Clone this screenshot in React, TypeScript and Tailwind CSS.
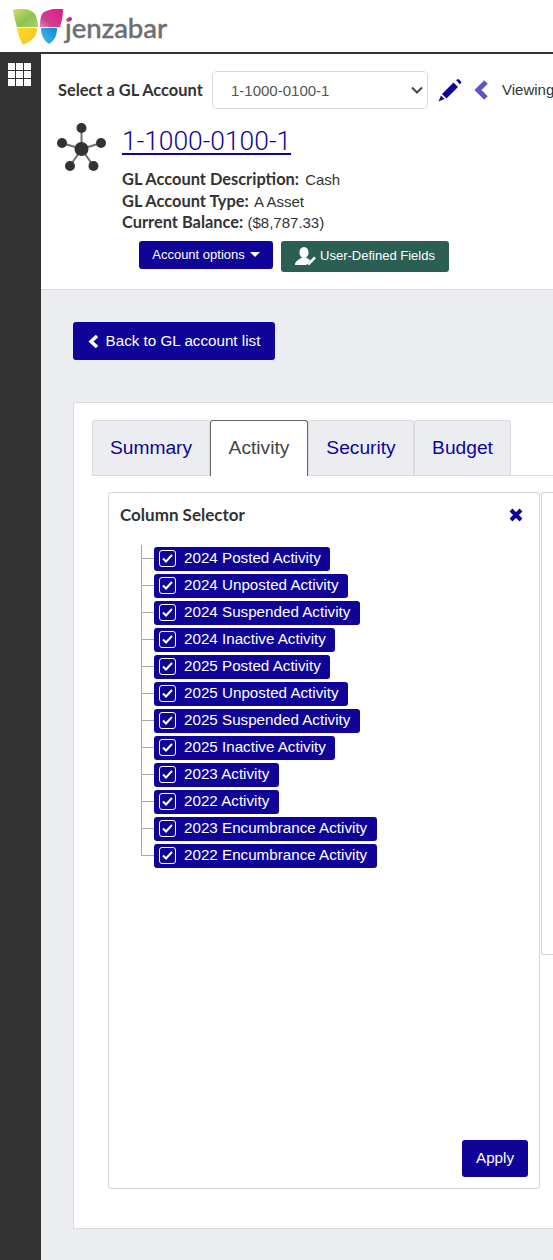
const columns = [
  '2024 Posted Activity',
  '2024 Unposted Activity',
  '2024 Suspended Activity',
  '2024 Inactive Activity',
  '2025 Posted Activity',
  '2025 Unposted Activity',
  '2025 Suspended Activity',
  '2025 Inactive Activity',
  '2023 Activity',
  '2022 Activity',
  '2023 Encumbrance Activity',
  '2022 Encumbrance Activity',
];

function Butterfly() {
  return (
    <svg width="51" height="37" viewBox="0 0 51 37" className="shrink-0">
      <defs>
        <linearGradient id="wingGreen" x1="0" y1="0" x2="1" y2="1">
          <stop offset="0" stopColor="#cfdc6a" />
          <stop offset="0.55" stopColor="#8fc24e" />
          <stop offset="1" stopColor="#a9cf7a" />
        </linearGradient>
        <linearGradient id="wingPink" x1="1" y1="0" x2="0" y2="1">
          <stop offset="0" stopColor="#e2168c" />
          <stop offset="0.7" stopColor="#d0408f" />
          <stop offset="1" stopColor="#d98ab0" />
        </linearGradient>
        <linearGradient id="wingYellow" x1="0" y1="0" x2="1" y2="1">
          <stop offset="0" stopColor="#fbdc1e" />
          <stop offset="0.7" stopColor="#f8c82a" />
          <stop offset="1" stopColor="#f29a3a" />
        </linearGradient>
        <linearGradient id="wingBlue" x1="1" y1="0" x2="0" y2="1">
          <stop offset="0" stopColor="#0f86cf" />
          <stop offset="1" stopColor="#49c0e6" />
        </linearGradient>
      </defs>
      <path d="M0 1 C6 -1 17 -1 22 5 C24 9 25 14 25 18 L4 18 C2 12 1 6 0 1 Z" fill="url(#wingGreen)" />
      <path d="M50 0 C44 -1 33 0 29 5 C27 9 27 14 27 18 L47 18 C49 12 50 6 50 0 Z" fill="url(#wingPink)" />
      <path d="M4 19 L24 19 C24 26 21 31 10 36 C7 31 5 25 4 19 Z" fill="url(#wingYellow)" />
      <path d="M28 19 L44 19 C44 26 42 31 36 35 C31 32 28 26 28 19 Z" fill="url(#wingBlue)" />
    </svg>
  );
}

function AccountGraphic() {
  return (
    <svg width="50" height="50" viewBox="0 0 50 50" className="shrink-0">
      <g stroke="#6f6f6f" strokeWidth="2">
        <line x1="24.5" y1="26" x2="24.5" y2="5" />
        <line x1="24.5" y1="26" x2="5" y2="20" />
        <line x1="24.5" y1="26" x2="44" y2="20" />
        <line x1="24.5" y1="26" x2="13" y2="43" />
        <line x1="24.5" y1="26" x2="36.5" y2="43" />
      </g>
      <g fill="#333333">
        <circle cx="24.5" cy="26" r="7" />
        <circle cx="24.5" cy="5" r="5" />
        <circle cx="5" cy="20" r="5" />
        <circle cx="44" cy="20" r="5" />
        <circle cx="13" cy="43" r="5" />
        <circle cx="36.5" cy="43" r="5" />
      </g>
    </svg>
  );
}

function GridIcon() {
  return (
    <div className="grid w-[23px] grid-cols-3 gap-px">
      {Array.from({ length: 9 }).map((_, i) => (
        <div key={i} className="h-[7px] w-[7px] bg-white" />
      ))}
    </div>
  );
}

function UserPenIcon() {
  return (
    <svg width="21" height="19" viewBox="0 0 21 19" className="shrink-0">
      <ellipse cx="9" cy="5.5" rx="4.5" ry="5.5" fill="#ffffff" />
      <path d="M0 18 C0 14 4 12.5 7 10.5 L11 10.5 C12.5 11.5 14 12 15 13 L11.5 18 Z" fill="#ffffff" />
      <path d="M13 17.5 L20 10.5" stroke="#ffffff" strokeWidth="2.5" />
    </svg>
  );
}

function ColumnRow({ label, last }: { label: string; last: boolean }) {
  return (
    <div className="relative flex h-[27px] items-center pl-[13px]">
      <div className={`absolute left-0 top-0 w-px bg-[#a8a8a4] ${last ? 'h-[14px]' : 'h-[27px]'}`} />
      <div className="absolute left-0 top-[13px] h-px w-[13px] bg-[#a8a8a4]" />
      <div className="flex h-[24px] items-center gap-[8px] rounded-[3px] bg-[#100498] pl-[5px] pr-[9.5px] text-[15.2px] text-white">
        <span className="flex h-[17px] w-[17px] items-center justify-center rounded-[3px] border border-white">
          <svg width="11" height="9" viewBox="0 0 11 9">
            <path d="M1 4.5 L4 7.5 L10 1" fill="none" stroke="#ffffff" strokeWidth="2" />
          </svg>
        </span>
        {label}
      </div>
    </div>
  );
}

export default function App() {
  return (
    <div className="h-[1260px] w-[553px] overflow-hidden bg-white font-['Liberation_Sans',Arial,sans-serif] text-[#333333]">
      <header className="flex h-[54px] items-start border-b-2 border-[#333333] pl-[13px] pt-[9px]">
        <Butterfly />
        <span className="relative ml-[1px] mt-[4px] font-['Lato',sans-serif] text-[27.5px] font-medium leading-[30px] text-[#6d6e71] [-webkit-text-stroke:0.4px_#6d6e71]">
          jenzabar
          <span className="absolute left-[3px] top-[4px] h-[4px] w-[4px] rounded-full bg-[#e2168c]" />
        </span>
      </header>

      <div className="flex h-[1206px]">
        <aside className="w-[41px] shrink-0 bg-[#333333] pl-[8px] pt-[9px]">
          <GridIcon />
        </aside>

        <main className="min-w-0 flex-1 bg-[#ebedf1]">
          <section className="h-[236px] w-[512px] overflow-hidden border-b border-[#dcdcdc] bg-white pl-[16px] pt-[17px]">
            <div className="flex h-[38px] items-center whitespace-nowrap">
              <label className="ml-[1px] w-[154px] shrink-0 font-['Lato',sans-serif] text-[16.4px] font-bold">Select a GL Account</label>
              <div className="flex h-[38px] w-[216px] shrink-0 items-center justify-between rounded-[5px] border border-[#d8d8d8] pl-[18px] pr-[4px] text-[15px] text-[#555555]">
                <span className="pt-[2px]">1-1000-0100-1</span>
                <svg width="12" height="8" viewBox="0 0 12 8">
                  <path d="M1 1.5 L6 6.5 L11 1.5" fill="none" stroke="#444444" strokeWidth="2" />
                </svg>
              </div>
              <svg width="24" height="23" viewBox="0 0 24 23" className="ml-[10px] shrink-0">
                <g fill="#100498">
                  <path d="M18 1 L20.5 0 L23.5 3 L22 5.5 Z" />
                  <path d="M15.5 3.5 L20 8 L8.5 19.5 L4 15 Z" />
                  <path d="M3 16.5 L6.5 20 L0.5 22.5 Z" />
                </g>
              </svg>
              <svg width="15" height="20" viewBox="0 0 15 20" className="ml-[12px] shrink-0">
                <path d="M12 2 L4 10 L12 18" fill="none" stroke="#5f55c0" strokeWidth="5" />
              </svg>
              <span className="ml-[13px] text-[15px]">Viewing</span>
            </div>

            <div className="mt-[14px] flex">
              <AccountGraphic />
              <div className="ml-[15px]">
                <a className="block pt-[1px] font-['Roboto',sans-serif] text-[26.4px] font-light leading-[34px] text-[#100498] underline decoration-2 underline-offset-[3px]">
                  1-1000-0100-1
                </a>
                <div className="mt-[11px] text-[15px] leading-[20.5px]">
                  <div><b className="font-['Lato',sans-serif] text-[16.4px] leading-[20px]">GL Account Description:</b> <span className="ml-[2px]">Cash</span></div>
                  <div><b className="font-['Lato',sans-serif] text-[16.4px] leading-[20px]">GL Account Type:</b> <span className="ml-[1px]">A Asset</span></div>
                  <div><b className="font-['Lato',sans-serif] text-[16.4px] leading-[20px]">Current Balance:</b> ($8,787.33)</div>
                </div>
              </div>
            </div>

            <div className="ml-[82px] mt-[7px] flex items-start gap-[8px]">
              <button className="flex h-[28px] w-[134px] items-center justify-center gap-[5px] rounded-[3px] bg-[#100498] text-[13px] text-white">
                Account options
                <span className="h-0 w-0 border-x-[5px] border-t-[5px] border-x-transparent border-t-white" />
              </button>
              <button className="flex h-[31px] w-[168px] items-center justify-center gap-[4px] rounded-[3px] bg-[#2b5f53] text-[13px] text-white">
                <UserPenIcon />
                User-Defined Fields
              </button>
            </div>
          </section>

          <div className="pl-[32px] pt-[32px]">
            <button className="flex h-[38px] w-[202px] items-center justify-center gap-[7px] rounded-[3px] bg-[#100498] text-[15.2px] text-white">
              <svg width="11" height="13" viewBox="0 0 11 13" className="shrink-0">
                <path d="M9 1 L3 6.5 L9 12" fill="none" stroke="#ffffff" strokeWidth="3.5" />
              </svg>
              Back to GL account list
            </button>
          </div>

          <section className="ml-[32px] mt-[42px] h-[827px] w-[520px] rounded-tl-[3px] border border-r-0 border-[#dcdcdc] bg-white pl-[18px] pt-[17px]">
            <div className="flex h-[56px] items-stretch border-b border-[#dcdcdc] text-[19.2px] text-[#100498]">
              <div className="flex w-[118px] items-center justify-center rounded-t-[3px] border border-b-0 border-[#dcdcdc] bg-[#ebedf1]">Summary</div>
              <div className="-mb-px flex w-[98px] items-center justify-center rounded-t-[3px] border border-b-0 border-[#666666] bg-white text-[#444444]">Activity</div>
              <div className="flex w-[106px] items-center justify-center rounded-t-[3px] border border-b-0 border-[#dcdcdc] bg-[#ebedf1]">Security</div>
              <div className="flex w-[97px] items-center justify-center rounded-t-[3px] border border-b-0 border-[#dcdcdc] bg-[#ebedf1]">Budget</div>
            </div>

            <div className="ml-[16px] mt-[16px] flex items-start gap-px">
              <div className="h-[697px] w-[432px] shrink-0 rounded-[3px] border border-[#d4d4d4] bg-white">
                <div className="flex h-[43px] items-center justify-between pl-[11px] pr-[16px]">
                  <span className="font-['Lato',sans-serif] text-[17px] font-bold">Column Selector</span>
                  <svg width="14" height="14" viewBox="0 0 14 14" className="shrink-0">
                    <path d="M2 2 L12 12 M12 2 L2 12" stroke="#100498" strokeWidth="4" />
                  </svg>
                </div>
                <div className="ml-[32px] mt-[9px]">
                  {columns.map((label, i) => (
                    <ColumnRow key={label} label={label} last={i === columns.length - 1} />
                  ))}
                </div>
                <div className="mr-[11px] mt-[271px] flex justify-end">
                  <button className="h-[37px] w-[66px] rounded-[3px] bg-[#100498] text-[15.2px] text-white">Apply</button>
                </div>
              </div>
              <div className="h-[463px] w-[40px] shrink-0 rounded-l-[3px] border border-r-0 border-[#d4d4d4] bg-white" />
            </div>
          </section>
        </main>
      </div>
    </div>
  );
}
